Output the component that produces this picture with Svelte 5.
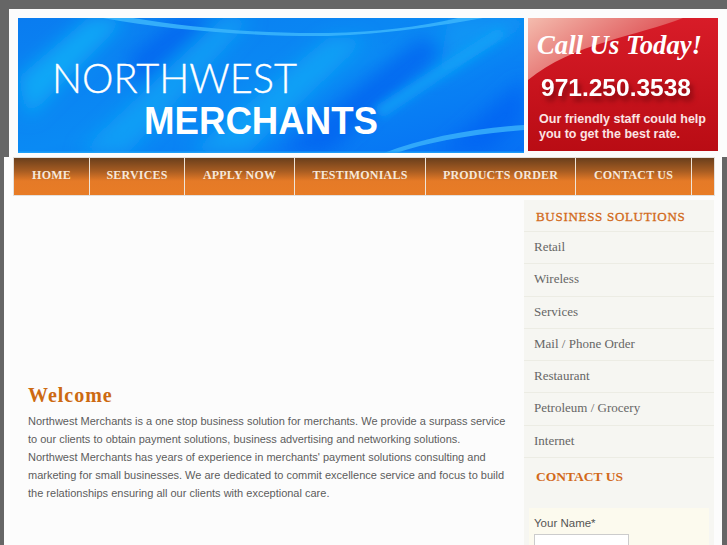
<script>
  const nav = ['HOME', 'SERVICES', 'APPLY NOW', 'TESTIMONIALS', 'PRODUCTS ORDER', 'CONTACT US'];
  const solutions = ['Retail', 'Wireless', 'Services', 'Mail / Phone Order', 'Restaurant', 'Petroleum / Grocery', 'Internet'];
</script>

<div class="page">
  <header class="top">
    <div class="banners">
      <svg class="logo" width="506" height="135" viewBox="0 0 506 135" role="img" aria-label="Northwest Merchants">
        <defs>
          <linearGradient id="bg" x1="0" y1="0" x2="1" y2="1">
            <stop offset="0" stop-color="#0a7cf0" />
            <stop offset="0.5" stop-color="#0a8af4" />
            <stop offset="1" stop-color="#0670f4" />
          </linearGradient>
          <filter id="soft" x="-30%" y="-30%" width="160%" height="160%"><feGaussianBlur stdDeviation="9" /></filter>
          <filter id="soft2" x="-30%" y="-30%" width="160%" height="160%"><feGaussianBlur stdDeviation="5" /></filter>
        </defs>
        <rect width="506" height="135" fill="url(#bg)" />
        <g filter="url(#soft)">
          <path d="M0 60 L70 0 L110 0 L10 100 Z" fill="#0fb0f8" opacity=".8" />
          <path d="M60 135 L205 0 L235 0 L110 135 Z" fill="#0fa6f6" opacity=".7" />
          <path d="M170 135 L310 20 L350 20 L230 135 Z" fill="#10aaf6" opacity=".7" />
          <path d="M110 40 L160 0 L195 0 L120 70 Z" fill="#0358ee" opacity=".6" />
          <path d="M260 135 L400 20 L430 30 L310 135 Z" fill="#0358ee" opacity=".6" />
          <path d="M420 135 L506 60 L506 100 L470 135 Z" fill="#0360f2" opacity=".7" />
          <path d="M430 0 L506 0 L506 10 L420 60 Z" fill="#0d9cf5" opacity=".6" />
        </g>
        <g filter="url(#soft2)">
          <path d="M355 90 L480 10 L490 16 L365 100 Z" fill="#16a8f8" opacity=".7" />
        </g>
        <path d="M85 0 C150 12 240 19 310 18 C370 16 420 8 465 0 L440 0 C400 9 360 14 310 15 C245 16 175 10 115 0 Z" fill="#3cb6fb" opacity=".85" />
        <path d="M366 135 C405 120 455 110 506 107 L506 112 C455 116 410 124 378 135 Z" fill="#38b0fa" opacity=".85" />
        <rect y="133.5" width="506" height="1.5" fill="#22a4f8" opacity=".8" />
        <text class="nw" x="34" y="75" textLength="245" lengthAdjust="spacingAndGlyphs">NORTHWEST</text>
        <text class="mc" x="126" y="115.5" textLength="234" lengthAdjust="spacingAndGlyphs">MERCHANTS</text>
      </svg>
      <svg class="call" width="190" height="133" viewBox="0 0 190 133" role="img" aria-label="Call us today">
        <defs>
          <linearGradient id="red" x1="0" y1="0" x2="0" y2="1">
            <stop offset="0" stop-color="#d81c28" />
            <stop offset="1" stop-color="#b90c14" />
          </linearGradient>
          <linearGradient id="sheen" x1="0" y1="0" x2="1" y2="0.6">
            <stop offset="0" stop-color="#f4bcae" />
            <stop offset="1" stop-color="#d8333c" />
          </linearGradient>
        </defs>
        <rect width="190" height="133" fill="url(#red)" />
        <path d="M0 0 L155 0 C110 18 45 25 0 62 Z" fill="url(#sheen)" />
        <text class="script" x="9" y="36" textLength="165" lengthAdjust="spacingAndGlyphs">Call Us Today!</text>
        <text class="phone" x="13" y="78" textLength="150" lengthAdjust="spacingAndGlyphs">971.250.3538</text>
        <text class="small" x="11" y="105" textLength="167" lengthAdjust="spacingAndGlyphs">Our friendly staff could help</text>
        <text class="small" x="11" y="120" textLength="141" lengthAdjust="spacingAndGlyphs">you to get the best rate.</text>
      </svg>
    </div>
  </header>

  <div class="main">
    <nav class="nav">
      {#each nav as item}
        <a href="#top" class="nav-item">{item}</a>
      {/each}
      <span class="nav-end"></span>
    </nav>

    <div class="columns">
      <section class="content">
        <h1>Welcome</h1>
        <p>Northwest Merchants is a one stop business solution for merchants. We provide a surpass service to our clients to obtain payment solutions, business advertising and networking solutions. Northwest Merchants has years of experience in merchants' payment solutions consulting and marketing for small businesses. We are dedicated to commit excellence service and focus to build the relationships ensuring all our clients with exceptional care.</p>
      </section>

      <aside class="side">
        <h2 class="biz">BUSINESS SOLUTIONS</h2>
        <ul>
          {#each solutions as s}
            <li>{s}</li>
          {/each}
        </ul>
        <h2 class="contact">CONTACT US</h2>
        <form class="form">
          <label for="name">Your Name*</label>
          <input id="name" type="text" />
        </form>
      </aside>
    </div>
  </div>
</div>

<style>
  :global(html), :global(body) {
    margin: 0;
    height: 545px;
    overflow: hidden;
    background: #666;
  }
  .page {
    height: 545px;
    overflow: hidden;
  }
  .top {
    margin-left: 9px;
    padding-top: 9px;
  }
  .banners {
    display: flex;
    align-items: flex-start;
    gap: 4px;
    background: #fcfcfc;
    padding: 9px 9px 4px 9px;
    height: 135px;
  }
  .logo, .call { display: block; flex: none; }
  .nw {
    font-family: Lato, "Liberation Sans", sans-serif;
    font-weight: 300;
    font-size: 42px;
    fill: #fff;
    stroke: #fff;
    stroke-width: 0.35px;
  }
  .mc {
    font-family: "Liberation Sans", sans-serif;
    font-weight: 700;
    font-size: 38px;
    fill: #fff;
  }
  .script {
    font-family: "Liberation Serif", serif;
    font-style: italic;
    font-weight: 700;
    font-size: 27px;
    fill: #fff;
  }
  .phone {
    font-family: "Liberation Sans", sans-serif;
    font-weight: 700;
    font-size: 24px;
    fill: #fff;
    filter: drop-shadow(3px 5px 2.5px rgba(112, 6, 12, 0.75));
  }
  .small {
    font-family: "Liberation Sans", sans-serif;
    font-weight: 700;
    font-size: 12.5px;
    fill: #fbe4e4;
  }
  .main {
    margin-left: 4px;
    width: 718px;
    height: 388px;
    background: #fcfcfc;
    padding-top: 1px;
    box-sizing: border-box;
  }
  .nav {
    display: grid;
    grid-template-columns: 76px 95px 110px 131px 150px 116px 1fr;
    margin-left: 10px;
    width: 700px;
    height: 37px;
    box-shadow: 0 0 0 1px #e4e0dc;
  }
  .nav-item, .nav-end {
    background: linear-gradient(#6a3f1c 0, #a75c22 35%, #e57a27 62%, #e87c26 100%);
  }
  .nav-item {
    border-right: 1px solid #efe4d8;
    line-height: 35px;
    text-align: center;
    font-family: "Liberation Serif", serif;
    font-weight: 700;
    font-size: 12px;
    letter-spacing: 0.2px;
    color: #f6e8da;
    text-decoration: none;
    white-space: nowrap;
  }
  .columns {
    display: flex;
    justify-content: space-between;
    margin: 5px 0 0 24px;
  }
  .content {
    width: 478px;
    padding-top: 183px;
  }
  h1 {
    margin: 0;
    font-family: "Liberation Serif", serif;
    font-weight: 700;
    font-size: 20px;
    line-height: 24px;
    letter-spacing: 1px;
    color: #cd6a12;
  }
  p {
    margin: 5px 0 0;
    font-family: "Liberation Sans", sans-serif;
    font-size: 11px;
    line-height: 18px;
    color: #5c5c5c;
  }
  .side {
    width: 190px;
    margin-right: 8px;
    height: 345px;
    background: #f6f6f2;
  }
  h2 {
    margin: 0;
    font-family: "Liberation Serif", serif;
    font-weight: 700;
    color: #d2691a;
  }
  .biz {
    padding-left: 12px;
    height: 32px;
    box-sizing: border-box;
    font-size: 13px;
    line-height: 34px;
    letter-spacing: 0.7px;
    font-weight: 400;
    -webkit-text-stroke: 0.3px #d2691a;
    border-bottom: 1px solid #ecece4;
  }
  ul {
    list-style: none;
    margin: 0;
    padding: 0;
  }
  li {
    box-sizing: border-box;
    height: 32.3px;
    padding-left: 10px;
    line-height: 30px;
    font-family: "Liberation Serif", serif;
    font-size: 13px;
    color: #666;
    border-bottom: 1px solid #ecece4;
  }
  .contact {
    padding: 10px 0 0 12px;
    font-size: 13.5px;
    line-height: 18px;
  }
  .form {
    margin: 22px 5px 0;
    padding: 7px 5px 0;
    background: #fcfaee;
    height: 60px;
  }
  label {
    display: block;
    font-family: "Liberation Sans", sans-serif;
    font-size: 11.5px;
    line-height: 16px;
    color: #555;
  }
  input {
    display: block;
    box-sizing: border-box;
    width: 95px;
    height: 24px;
    margin-top: 3px;
    background: #fff;
    border: 1px solid #ccc;
    padding: 0;
  }
</style>
